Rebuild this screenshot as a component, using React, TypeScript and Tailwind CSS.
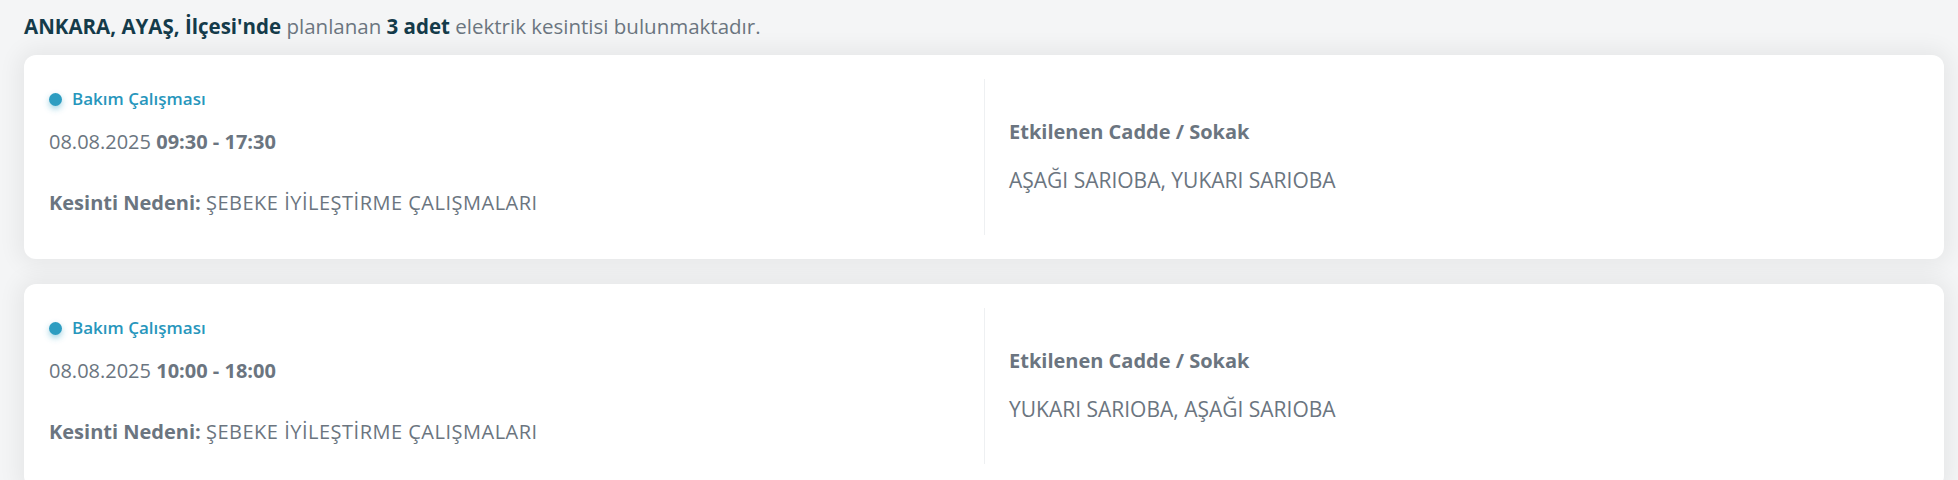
type Outage = {
  date: string;
  time: string;
  reason: string;
  streets: string;
};

const outages: Outage[] = [
  {
    date: "08.08.2025",
    time: "09:30 - 17:30",
    reason: "ŞEBEKE İYİLEŞTİRME ÇALIŞMALARI",
    streets: "AŞAĞI SARIOBA, YUKARI SARIOBA",
  },
  {
    date: "08.08.2025",
    time: "10:00 - 18:00",
    reason: "ŞEBEKE İYİLEŞTİRME ÇALIŞMALARI",
    streets: "YUKARI SARIOBA, AŞAĞI SARIOBA",
  },
  {
    date: "08.08.2025",
    time: "09:00 - 17:00",
    reason: "ŞEBEKE İYİLEŞTİRME ÇALIŞMALARI",
    streets: "AŞAĞI SARIOBA",
  },
];

function OutageCard({ outage }: { outage: Outage }) {
  return (
    <div className="rounded-xl bg-white p-6 shadow-[0_0_22px_6px_rgba(0,0,0,0.06)]">
      <div className="grid grid-cols-2">
        {/* left: type, time window, reason */}
        <div className="flex flex-col pt-2 pb-[18px] pl-px">
          <div className="flex h-6 items-center gap-[10px]">
            <span className="h-[13px] w-[13px] rounded-full bg-[#2d9dc1] shadow-[0_3px_6px_rgba(45,157,193,0.45)]" />
            <span className="text-[17px] font-semibold text-[#2796bc]">
              Bakım Çalışması
            </span>
          </div>
          <div className="mt-[17px] text-[20px] leading-7 text-[#6b7580]">
            {outage.date} <span className="font-bold">{outage.time}</span>
          </div>
          <div className="mt-[33px] text-[20px] leading-7 text-[#6b7580]">
            <span className="font-bold">Kesinti Nedeni:</span>{" "}
            <span className="tracking-[0.5px]">{outage.reason}</span>
          </div>
        </div>

        {/* right: affected streets */}
        <div className="flex flex-col justify-center border-l border-[#eef0f2] pb-1 pl-6">
          <div className="text-[20px] font-bold leading-[30px] text-[#6b7580]">
            Etkilenen Cadde / Sokak
          </div>
          <div className="mt-[19px] text-[21px] leading-7 text-[#6b7580]">
            {outage.streets}
          </div>
        </div>
      </div>
    </div>
  );
}

export default function App() {
  return (
    <div
      className="min-h-screen bg-[#f4f5f6] pt-[14px] pr-[14px] pb-10 pl-6"
      style={{ fontFamily: '"Open Sans", "Noto Sans", sans-serif' }}
    >
      <p className="mb-[17px] text-[20.5px] leading-6 text-[#6b7580]">
        <span className="font-bold text-[#143b4a]">ANKARA, AYAŞ, İlçesi'nde</span>{" "}
        planlanan <span className="font-bold text-[#143b4a]">3 adet</span> elektrik
        kesintisi bulunmaktadır.
      </p>
      <div className="flex flex-col gap-[25px]">
        {outages.map((o, i) => (
          <OutageCard key={i} outage={o} />
        ))}
      </div>
    </div>
  );
}
